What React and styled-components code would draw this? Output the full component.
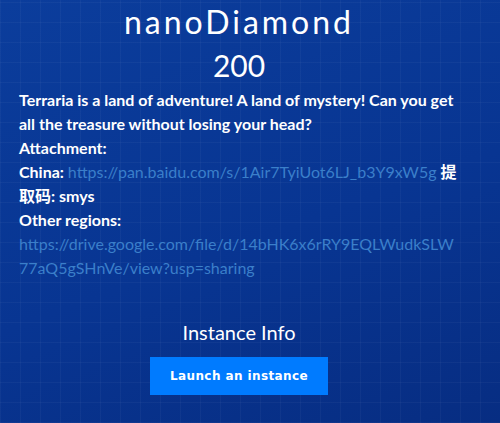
import React from "react";
import styled, { createGlobalStyle } from "styled-components";

const GlobalStyle = createGlobalStyle`
  html, body {
    margin: 0;
    padding: 0;
    height: 100%;
  }
  body {
    font-family: Lato, "Noto Sans CJK SC", sans-serif;
    background: #0a3890;
  }
`;

const Page = styled.div`
  width: 500px;
  height: 423px;
  overflow: hidden;
  color: #fff;
  background-color: #0a3892;
  background-image:
    repeating-linear-gradient(90deg, rgba(255, 255, 255, 0.035) 0 1px, transparent 1px 20px),
    repeating-linear-gradient(0deg, rgba(255, 255, 255, 0.035) 0 1px, transparent 1px 20px),
    linear-gradient(160deg, #0b3d9c 0%, #083592 55%, #072d82 100%);
`;

const Header = styled.div`
  display: flex;
  flex-direction: column;
  align-items: center;
  padding: 2px 22px 0 0;
`;

const Title = styled.h3`
  margin: 0;
  font-family: Lato, sans-serif;
  font-weight: 400;
  font-size: 32px;
  letter-spacing: 3px;
  line-height: 40px;
`;

const Points = styled.h4`
  margin: 5px 0 0;
  font-family: Lato, sans-serif;
  font-weight: 400;
  font-size: 30px;
  line-height: 36px;
`;

const Description = styled.div`
  padding: 5px 40px 0 19px;
  font-size: 16px;
  font-weight: 700;
  line-height: 24px;
`;

const Line = styled.p`
  margin: 0;
  word-break: ${(p) => (p.$breakAll ? "break-all" : "normal")};
`;

const Link = styled.a`
  color: #3b7fca;
  font-weight: 400;
  text-decoration: none;
`;

const Instance = styled.div`
  display: flex;
  flex-direction: column;
  align-items: center;
  margin-top: 39px;
  margin-left: -22px;
`;

const InstanceTitle = styled.h5`
  margin: 0;
  font-size: 20px;
  font-weight: 400;
  line-height: 26px;
`;

const LaunchButton = styled.button`
  margin-top: 12px;
  width: 178px;
  height: 38px;
  border: none;
  border-radius: 0;
  background: #007bff;
  color: #fff;
  font-family: "DejaVu Sans", sans-serif;
  font-weight: 700;
  font-size: 12px;
  letter-spacing: 0.4px;
`;

export default function App() {
  return (
    <>
      <GlobalStyle />
      <Page>
        <Header>
          <Title>nanoDiamond</Title>
          <Points>200</Points>
        </Header>
        <Description>
          <Line>
            Terraria is a land of adventure! A land of mystery! Can you get all the treasure without losing your head?
          </Line>
          <Line>Attachment:</Line>
          <Line>
            China: <Link href="#">https://pan.baidu.com/s/1Air7TyiUot6LJ_b3Y9xW5g</Link> 提取码: smys
          </Line>
          <Line>Other regions:</Line>
          <Line $breakAll>
            <Link href="#">https://drive.google.com/file/d/14bHK6x6rRY9EQLWudkSLW77aQ5gSHnVe/view?usp=sharing</Link>
          </Line>
        </Description>
        <Instance>
          <InstanceTitle>Instance Info</InstanceTitle>
          <LaunchButton>Launch an instance</LaunchButton>
        </Instance>
      </Page>
    </>
  );
}
